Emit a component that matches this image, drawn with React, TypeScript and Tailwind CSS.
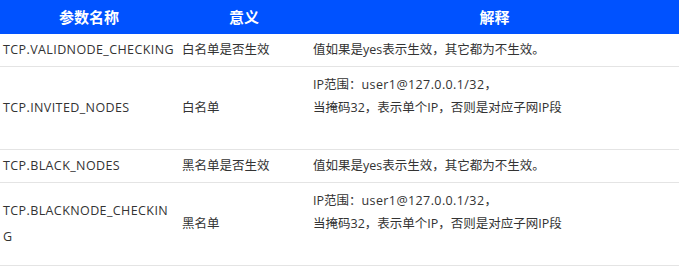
import React from "react";

export default function App() {
  return (
    <div className="w-[679px] h-[271px] bg-white overflow-hidden font-['Open_Sans','Noto_Sans_CJK_SC',sans-serif]">
      <div className="grid grid-cols-[178px_132px_369px] h-[34px] bg-[#0052ff] text-white text-[15px] font-bold items-center">
        <div className="text-center">参数名称</div>
        <div className="text-center">意义</div>
        <div className="text-center">解释</div>
      </div>
      <div className="text-[12.5px] text-[#333]">
        <div className="grid grid-cols-[178px_132px_369px] h-[33px] border-b border-[#e4e4e4] items-center">
          <div className="pl-[3px] tracking-[0.4px]">TCP.VALIDNODE_CHECKING</div>
          <div className="pl-[4px]">白名单是否生效</div>
          <div className="pl-[3px]">值如果是yes表示生效，其它都为不生效。</div>
        </div>
        <div className="grid grid-cols-[178px_132px_369px] h-[83px] border-b border-[#e4e4e4] items-center">
          <div className="pl-[3px] tracking-[0.4px]">TCP.INVITED_NODES</div>
          <div className="pl-[4px]">白名单</div>
          <div className="pl-[3px] self-start pt-[6px] leading-[23px]">
            <div>IP范围：<span className="tracking-[0.4px]">user1@127.0.0.1/32</span>，</div>
            <div>当掩码32，表示单个IP，否则是对应子网IP段</div>
          </div>
        </div>
        <div className="grid grid-cols-[178px_132px_369px] h-[33px] border-b border-[#e4e4e4] items-center">
          <div className="pl-[3px] tracking-[0.4px]">TCP.BLACK_NODES</div>
          <div className="pl-[4px]">黑名单是否生效</div>
          <div className="pl-[3px]">值如果是yes表示生效，其它都为不生效。</div>
        </div>
        <div className="grid grid-cols-[178px_132px_369px] h-[83px] border-b border-[#e4e4e4] items-center">
          <div className="pl-[3px] pr-[4px] min-w-0 break-all leading-[26px] tracking-[0.4px]">TCP.BLACKNODE_CHECKING</div>
          <div className="pl-[4px]">黑名单</div>
          <div className="pl-[3px] self-start pt-[6px] leading-[23px]">
            <div>IP范围：<span className="tracking-[0.4px]">user1@127.0.0.1/32</span>，</div>
            <div>当掩码32，表示单个IP，否则是对应子网IP段</div>
          </div>
        </div>
      </div>
    </div>
  );
}
